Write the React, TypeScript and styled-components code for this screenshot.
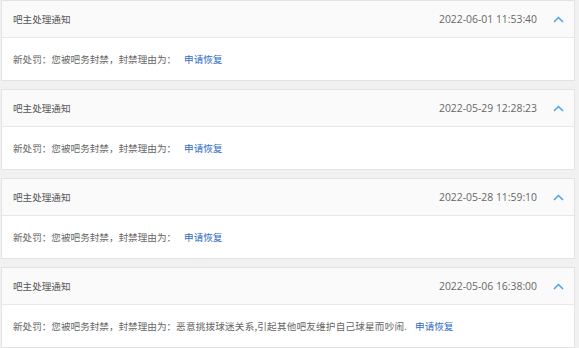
import React from "react";
import styled, { createGlobalStyle } from "styled-components";

const Global = createGlobalStyle`
  html, body { margin: 0; padding: 0; background: #f1f1f1; }
  body { font-family: "Noto Sans CJK SC", "Noto Sans", sans-serif; }
`;

const List = styled.div`
  display: flex;
  flex-direction: column;
  gap: 8px;
  padding: 0 4px 0 1px;
`;

const Card = styled.section`
  border: 1px solid #e3e3e3;
  background: #fff;
`;

const Header = styled.div`
  height: 36px;
  display: flex;
  align-items: center;
  padding: 0 10px 0 11px;
  background: #fafafa;
  border-bottom: 1px solid #e8e8e8;
`;

const Title = styled.span`
  flex: 1;
  font-size: 9.6px;
  color: #555;
`;

const Time = styled.span`
  font-family: "Open Sans", "Noto Sans", sans-serif;
  font-size: 10.4px;
  color: #666;
  margin-right: 16px;
`;

const Chevron = styled.svg`
  width: 11px;
  height: 7px;
  display: block;
`;

const Body = styled.div`
  height: 42px;
  display: flex;
  align-items: center;
  padding: 0 11px;
  font-size: 9.6px;
  color: #666;
  white-space: nowrap;
`;

const Reason = styled.span`
  letter-spacing: 0.2px;
`;

const Link = styled.a`
  color: #2f6bc4;
  margin-left: 8px;
  text-decoration: none;
  cursor: pointer;
`;

const items = [
  { time: "2022-06-01 11:53:40", reason: "" },
  { time: "2022-05-29 12:28:23", reason: "" },
  { time: "2022-05-28 11:59:10", reason: "" },
  { time: "2022-05-06 16:38:00", reason: "恶意挑拨球迷关系,引起其他吧友维护自己球星而吵闹." },
];

export default function App() {
  return (
    <>
      <Global />
      <List>
        {items.map((it) => (
          <Card key={it.time}>
            <Header>
              <Title>吧主处理通知</Title>
              <Time>{it.time}</Time>
              <Chevron viewBox="0 0 11 7">
                <polyline points="1,6 5.5,1.5 10,6" fill="none" stroke="#47a2f2" strokeWidth="1.5" />
              </Chevron>
            </Header>
            <Body>
              新处罚：您被吧务封禁，封禁理由为：
              {it.reason && <Reason>{it.reason}</Reason>}
              <Link>申请恢复</Link>
            </Body>
          </Card>
        ))}
      </List>
    </>
  );
}
